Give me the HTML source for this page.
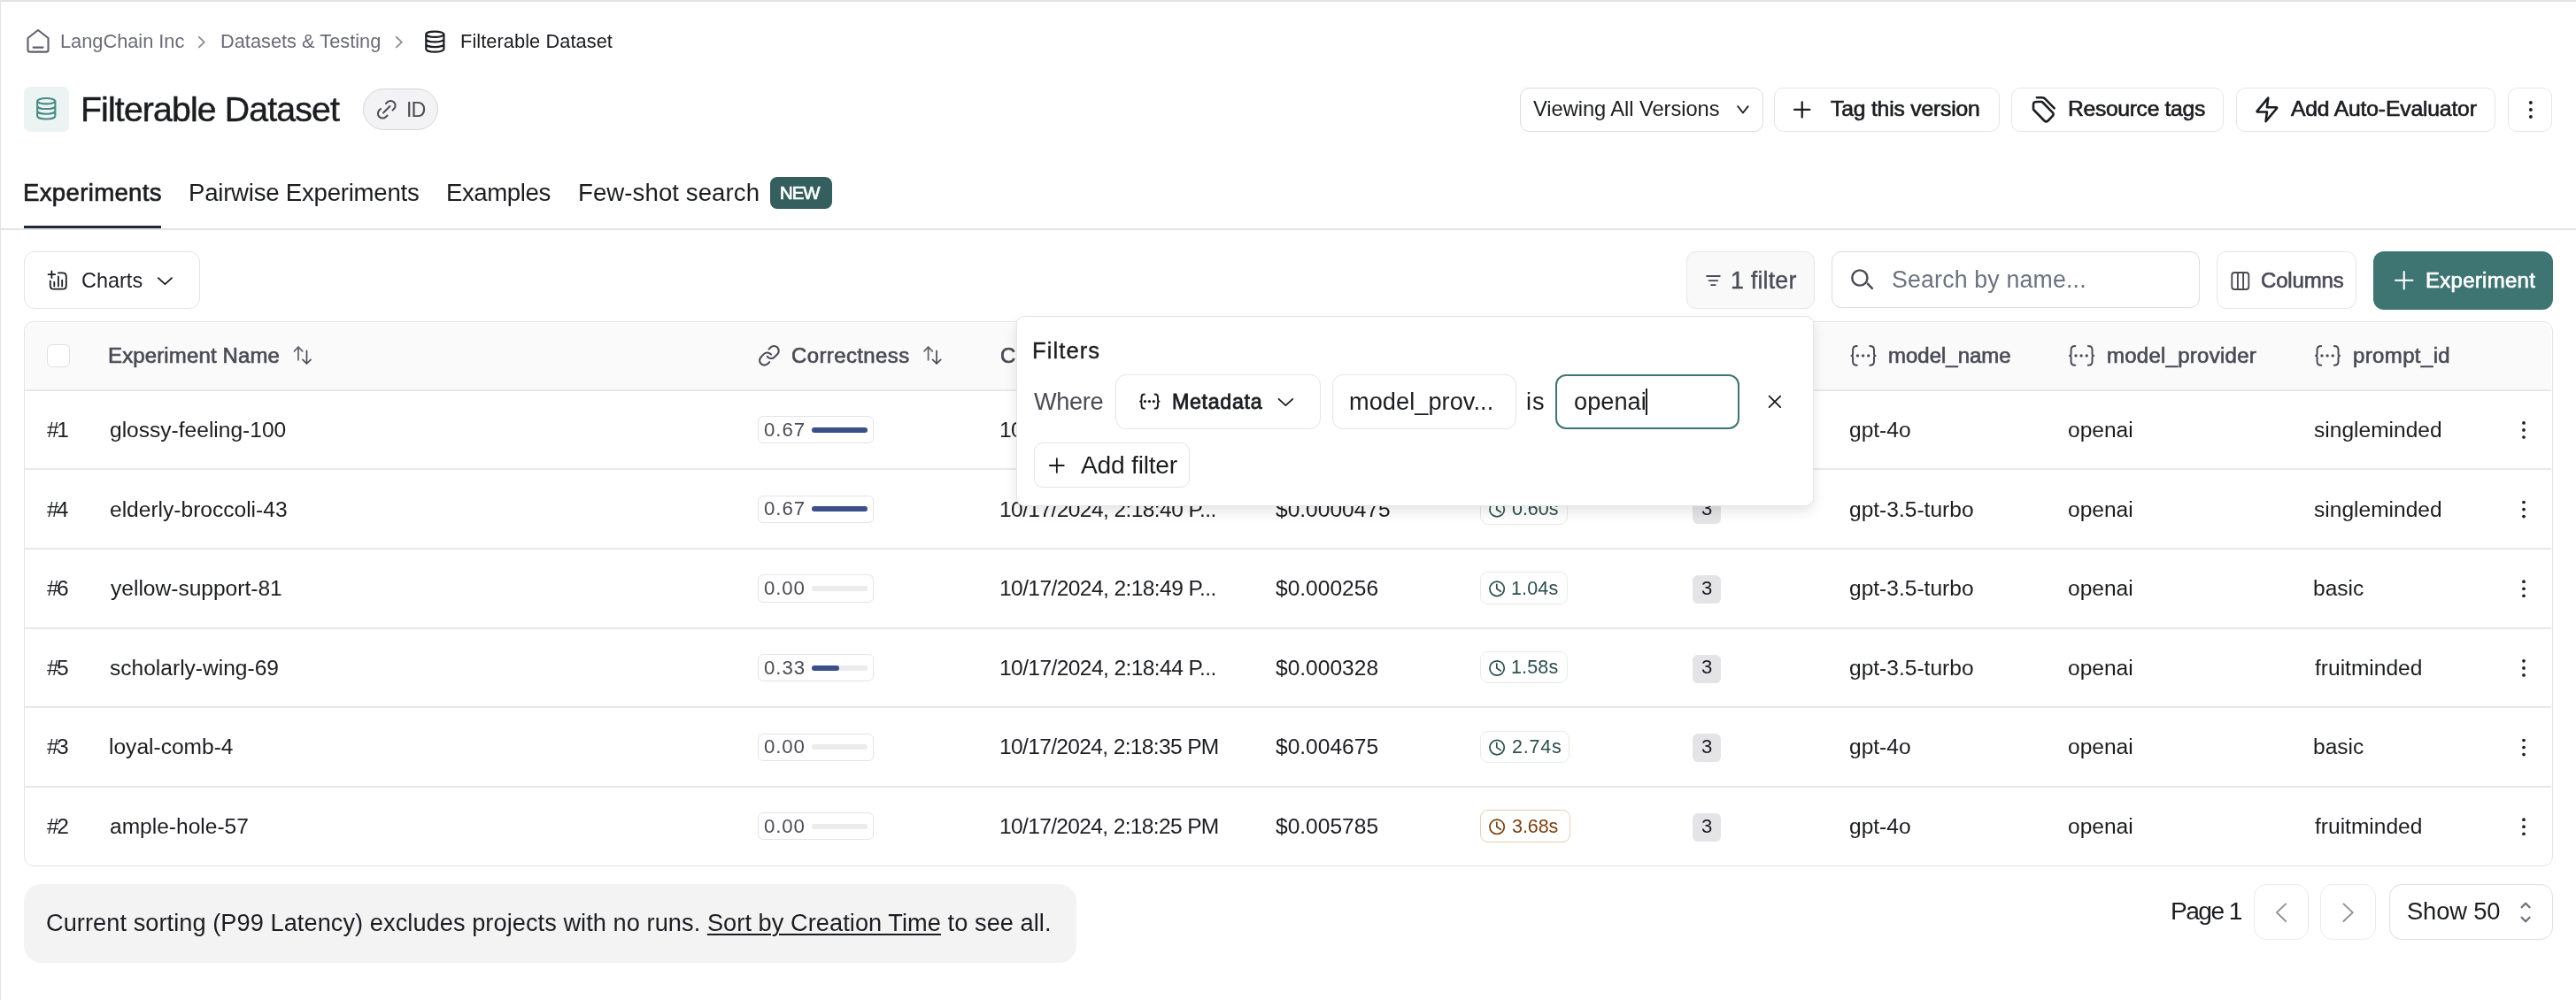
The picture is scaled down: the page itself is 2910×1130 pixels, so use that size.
<!DOCTYPE html>
<html><head><meta charset="utf-8"><style>
html,body{margin:0;padding:0;background:#fff;}
body{width:2910px;height:1130px;position:relative;overflow:hidden;font-family:"Liberation Sans",sans-serif;}
.t{position:absolute;white-space:nowrap;will-change:transform;}
.b{position:absolute;box-sizing:border-box;}
svg{position:absolute;left:0;top:0;}
</style></head><body>
<div class="b" style="left:0.00px;top:0.00px;width:2910.00px;height:2.00px;background:#e1e4e1;border-radius:0px;"></div><div class="b" style="left:0.00px;top:0.00px;width:1.00px;height:1130.00px;background:#e3e3e6;border-radius:0px;"></div><div class="t" style="left:68.21px;top:36.24px;font-size:21.80px;line-height:21.80px;font-weight:400;color:#6b6c78;letter-spacing:-0.020px;">LangChain Inc</div><div class="t" style="left:249.21px;top:36.24px;font-size:21.80px;line-height:21.80px;font-weight:400;color:#6b6c78;letter-spacing:0.000px;">Datasets &amp; Testing</div><div class="t" style="left:520.21px;top:36.24px;font-size:21.80px;line-height:21.80px;font-weight:400;color:#1c1d21;letter-spacing:0.064px;">Filterable Dataset</div><div class="b" style="left:27.00px;top:98.00px;width:51.00px;height:51.00px;background:#ebf4f3;border-radius:7px;"></div><div class="t" style="left:90.73px;top:103.57px;font-size:39.24px;line-height:39.24px;font-weight:400;color:#1c1d21;letter-spacing:-0.856px;-webkit-text-stroke:0.5px #1c1d21;">Filterable Dataset</div><div class="b" style="left:410.20px;top:100.20px;width:84.50px;height:46.50px;background:#f3f3f5;border:1.5px solid #d6d6dc;border-radius:24px;box-sizing:border-box;"></div><div class="t" style="left:458.65px;top:112.91px;font-size:23.26px;line-height:23.26px;font-weight:400;color:#4b4b57;letter-spacing:-0.997px;">ID</div><div class="b" style="left:1717.20px;top:98.90px;width:274.40px;height:49.80px;background:#fff;border:1.5px solid #dadae0;border-radius:10.5px;box-sizing:border-box;"></div><div class="b" style="left:2004.20px;top:98.90px;width:255.30px;height:49.80px;background:#fff;border:1.5px solid #e5e5e8;border-radius:10.5px;box-sizing:border-box;"></div><div class="b" style="left:2272.20px;top:98.90px;width:239.40px;height:49.80px;background:#fff;border:1.5px solid #e5e5e8;border-radius:10.5px;box-sizing:border-box;"></div><div class="b" style="left:2525.70px;top:98.90px;width:293.70px;height:49.80px;background:#fff;border:1.5px solid #e5e5e8;border-radius:10.5px;box-sizing:border-box;"></div><div class="b" style="left:2833.30px;top:98.90px;width:50.00px;height:49.80px;background:#fff;border:1.5px solid #e5e5e8;border-radius:10.5px;box-sizing:border-box;"></div><div class="t" style="left:1731.90px;top:111.84px;font-size:23.69px;line-height:23.69px;font-weight:400;color:#1c1d21;letter-spacing:-0.057px;">Viewing All Versions</div><div class="t" style="left:2068.47px;top:110.68px;font-size:24.71px;line-height:24.71px;font-weight:400;color:#1c1d21;letter-spacing:-0.194px;-webkit-text-stroke:0.65px #1c1d21;">Tag this version</div><div class="t" style="left:2336.30px;top:110.68px;font-size:24.71px;line-height:24.71px;font-weight:400;color:#1c1d21;letter-spacing:-0.337px;-webkit-text-stroke:0.65px #1c1d21;">Resource tags</div><div class="t" style="left:2587.78px;top:110.68px;font-size:24.71px;line-height:24.71px;font-weight:400;color:#1c1d21;letter-spacing:-0.175px;-webkit-text-stroke:0.65px #1c1d21;">Add Auto-Evaluator</div><div class="t" style="left:25.66px;top:203.62px;font-size:27.62px;line-height:27.62px;font-weight:400;color:#1c1d21;letter-spacing:0.313px;-webkit-text-stroke:0.65px #1c1d21;">Experiments</div><div class="t" style="left:212.73px;top:203.62px;font-size:27.62px;line-height:27.62px;font-weight:400;color:#1c1d21;letter-spacing:-0.245px;">Pairwise Experiments</div><div class="t" style="left:503.73px;top:203.62px;font-size:27.62px;line-height:27.62px;font-weight:400;color:#1c1d21;letter-spacing:-0.427px;">Examples</div><div class="t" style="left:652.73px;top:203.62px;font-size:27.62px;line-height:27.62px;font-weight:400;color:#1c1d21;letter-spacing:0.066px;">Few-shot search</div><div class="b" style="left:869.90px;top:199.90px;width:70.20px;height:36.00px;background:#345f5e;border-radius:8px;"></div><div class="t" style="left:881.48px;top:207.87px;font-size:20.35px;line-height:20.35px;font-weight:400;color:#fff;letter-spacing:-1.018px;-webkit-text-stroke:0.7px #fff;">NEW</div><div class="b" style="left:1.00px;top:258.00px;width:2909.00px;height:1.50px;background:#e4e4e7;border-radius:0px;"></div><div class="b" style="left:27.00px;top:254.80px;width:155.00px;height:3.40px;background:#1e293b;border-radius:0px;"></div><div class="b" style="left:26.90px;top:284.20px;width:199.60px;height:65.30px;background:#fff;border:1.5px solid #e5e5e8;border-radius:12px;box-sizing:border-box;"></div><div class="t" style="left:91.91px;top:305.99px;font-size:23.40px;line-height:23.40px;font-weight:400;color:#1c1d21;letter-spacing:0.042px;">Charts</div><div class="b" style="left:1904.70px;top:284.00px;width:145.30px;height:65.00px;background:#f9f9fa;border:1.5px solid #e6e6ea;border-radius:11px;box-sizing:border-box;"></div><div class="t" style="left:1954.86px;top:303.86px;font-size:26.74px;line-height:26.74px;font-weight:400;color:#4b4b57;letter-spacing:0.222px;-webkit-text-stroke:0.4px #4b4b57;">1 filter</div><div class="b" style="left:2069.00px;top:284.00px;width:415.60px;height:64.00px;background:#fff;border:1.5px solid #dcdce2;border-radius:11px;box-sizing:border-box;"></div><div class="t" style="left:2136.79px;top:303.16px;font-size:26.74px;line-height:26.74px;font-weight:400;color:#6b7280;letter-spacing:0.164px;">Search by name...</div><div class="b" style="left:2503.70px;top:284.00px;width:158.00px;height:65.00px;background:#fff;border:1.5px solid #e6e6ea;border-radius:11px;box-sizing:border-box;"></div><div class="t" style="left:2553.71px;top:304.59px;font-size:23.98px;line-height:23.98px;font-weight:400;color:#4b4b57;letter-spacing:-0.133px;-webkit-text-stroke:0.65px #4b4b57;">Columns</div><div class="b" style="left:2681.00px;top:284.00px;width:202.60px;height:65.50px;background:#3e7573;border-radius:12px;"></div><div class="t" style="left:2739.96px;top:304.69px;font-size:23.98px;line-height:23.98px;font-weight:400;color:#fff;letter-spacing:0.289px;-webkit-text-stroke:0.65px #fff;">Experiment</div><div class="b" style="left:26.80px;top:363.00px;width:2857.20px;height:615.80px;background:#fff;border:1.5px solid #e4e4e7;border-radius:11px;box-sizing:border-box;overflow:hidden;"></div><div class="b" style="left:28.30px;top:364.50px;width:2854.20px;height:76.00px;background:#fafafa;border-radius:0px;border-radius:10px 10px 0 0;"></div><div class="b" style="left:28.30px;top:440.00px;width:2854.20px;height:1.50px;background:#e8e8eb;border-radius:0px;"></div><div class="b" style="left:28.30px;top:529.00px;width:2854.20px;height:1.50px;background:#e8e8eb;border-radius:0px;"></div><div class="b" style="left:28.30px;top:619.00px;width:2854.20px;height:1.50px;background:#e8e8eb;border-radius:0px;"></div><div class="b" style="left:28.30px;top:709.00px;width:2854.20px;height:1.50px;background:#e8e8eb;border-radius:0px;"></div><div class="b" style="left:28.30px;top:798.00px;width:2854.20px;height:1.50px;background:#e8e8eb;border-radius:0px;"></div><div class="b" style="left:28.30px;top:888.00px;width:2854.20px;height:1.50px;background:#e8e8eb;border-radius:0px;"></div><div class="b" style="left:53.20px;top:389.00px;width:25.60px;height:25.60px;background:#fff;border:1.8px solid #e1e1e5;border-radius:6px;box-sizing:border-box;"></div><div class="t" style="left:122.36px;top:389.69px;font-size:23.98px;line-height:23.98px;font-weight:400;color:#4b4b57;letter-spacing:0.147px;-webkit-text-stroke:0.65px #4b4b57;">Experiment Name</div><div class="t" style="left:894.11px;top:389.69px;font-size:23.98px;line-height:23.98px;font-weight:400;color:#4b4b57;letter-spacing:0.395px;-webkit-text-stroke:0.65px #4b4b57;">Correctness</div><div class="t" style="left:1130.11px;top:389.69px;font-size:23.98px;line-height:23.98px;font-weight:400;color:#4b4b57;letter-spacing:0.000px;-webkit-text-stroke:0.65px #4b4b57;">Created At</div><div class="t" style="left:2133.43px;top:389.69px;font-size:23.98px;line-height:23.98px;font-weight:400;color:#4b4b57;letter-spacing:0.007px;-webkit-text-stroke:0.65px #4b4b57;">model_name</div><div class="t" style="left:2379.93px;top:389.69px;font-size:23.98px;line-height:23.98px;font-weight:400;color:#4b4b57;letter-spacing:0.272px;-webkit-text-stroke:0.65px #4b4b57;">model_provider</div><div class="t" style="left:2657.98px;top:389.69px;font-size:23.98px;line-height:23.98px;font-weight:400;color:#4b4b57;letter-spacing:0.387px;-webkit-text-stroke:0.65px #4b4b57;">prompt_id</div><div class="t" style="left:52.89px;top:474.10px;font-size:24.56px;line-height:24.56px;font-weight:400;color:#1c1d21;letter-spacing:-2.515px;">#1</div><div class="t" style="left:123.77px;top:474.10px;font-size:24.56px;line-height:24.56px;font-weight:400;color:#1c1d21;letter-spacing:0.000px;">glossy-feeling-100</div><div class="b" style="left:856.30px;top:470.02px;width:130.50px;height:31.20px;background:#fff;border:1.5px solid #e4e4e7;border-radius:6px;box-sizing:border-box;"></div><div class="t" style="left:862.93px;top:474.60px;font-size:22.24px;line-height:22.24px;font-weight:400;color:#4b4b57;letter-spacing:0.968px;">0.67</div><div class="b" style="left:916.50px;top:482.72px;width:63.50px;height:6.00px;background:#ececee;border-radius:3px;"></div><div class="b" style="left:916.50px;top:482.72px;width:63.50px;height:6.00px;background:#3b4f8a;border-radius:3px;"></div><div class="t" style="left:1129.13px;top:474.10px;font-size:24.56px;line-height:24.56px;font-weight:400;color:#1c1d21;letter-spacing:-0.588px;">10/17/2024, 2:18:52 P...</div><div class="t" style="left:1441.34px;top:474.10px;font-size:24.56px;line-height:24.56px;font-weight:400;color:#1c1d21;letter-spacing:0.000px;">$0.000089</div><div class="b" style="left:1672.40px;top:466.93px;width:98.20px;height:36.60px;background:#fff;border:1.5px solid #e3efe1;border-radius:9px;box-sizing:border-box;"></div><div class="t" style="left:1708.26px;top:475.51px;font-size:21.51px;line-height:21.51px;font-weight:400;color:#2d4f4b;letter-spacing:-0.052px;">0.45s</div><div class="b" style="left:1912.00px;top:470.82px;width:32.00px;height:31.80px;background:#e4e4e7;border-radius:6px;"></div><div class="t" style="left:1921.91px;top:474.31px;font-size:22.17px;line-height:22.17px;font-weight:400;color:#1c1d21;letter-spacing:0.000px;">3</div><div class="t" style="left:2088.97px;top:474.10px;font-size:24.56px;line-height:24.56px;font-weight:400;color:#1c1d21;letter-spacing:0.000px;">gpt-4o</div><div class="t" style="left:2335.97px;top:474.10px;font-size:24.56px;line-height:24.56px;font-weight:400;color:#1c1d21;letter-spacing:0.000px;">openai</div><div class="t" style="left:2614.32px;top:474.10px;font-size:24.56px;line-height:24.56px;font-weight:400;color:#1c1d21;letter-spacing:0.000px;">singleminded</div><div class="t" style="left:52.89px;top:563.60px;font-size:24.56px;line-height:24.56px;font-weight:400;color:#1c1d21;letter-spacing:-2.995px;">#4</div><div class="t" style="left:123.76px;top:563.60px;font-size:24.56px;line-height:24.56px;font-weight:400;color:#1c1d21;letter-spacing:0.000px;">elderly-broccoli-43</div><div class="b" style="left:856.30px;top:559.67px;width:130.50px;height:31.20px;background:#fff;border:1.5px solid #e4e4e7;border-radius:6px;box-sizing:border-box;"></div><div class="t" style="left:862.93px;top:564.25px;font-size:22.24px;line-height:22.24px;font-weight:400;color:#4b4b57;letter-spacing:0.968px;">0.67</div><div class="b" style="left:916.50px;top:572.37px;width:63.50px;height:6.00px;background:#ececee;border-radius:3px;"></div><div class="b" style="left:916.50px;top:572.37px;width:63.50px;height:6.00px;background:#3b4f8a;border-radius:3px;"></div><div class="t" style="left:1129.13px;top:563.60px;font-size:24.56px;line-height:24.56px;font-weight:400;color:#1c1d21;letter-spacing:-0.588px;">10/17/2024, 2:18:40 P...</div><div class="t" style="left:1441.34px;top:563.60px;font-size:24.56px;line-height:24.56px;font-weight:400;color:#1c1d21;letter-spacing:0.000px;">$0.0000475</div><div class="b" style="left:1672.40px;top:556.57px;width:98.20px;height:36.60px;background:#fff;border:1.5px solid #e3efe1;border-radius:9px;box-sizing:border-box;"></div><div class="t" style="left:1708.26px;top:565.16px;font-size:21.51px;line-height:21.51px;font-weight:400;color:#2d4f4b;letter-spacing:-0.052px;">0.60s</div><div class="b" style="left:1912.00px;top:560.47px;width:32.00px;height:31.80px;background:#e4e4e7;border-radius:6px;"></div><div class="t" style="left:1921.91px;top:563.96px;font-size:22.17px;line-height:22.17px;font-weight:400;color:#1c1d21;letter-spacing:0.000px;">3</div><div class="t" style="left:2088.97px;top:563.60px;font-size:24.56px;line-height:24.56px;font-weight:400;color:#1c1d21;letter-spacing:0.000px;">gpt-3.5-turbo</div><div class="t" style="left:2335.97px;top:563.60px;font-size:24.56px;line-height:24.56px;font-weight:400;color:#1c1d21;letter-spacing:0.000px;">openai</div><div class="t" style="left:2614.32px;top:563.60px;font-size:24.56px;line-height:24.56px;font-weight:400;color:#1c1d21;letter-spacing:0.000px;">singleminded</div><div class="t" style="left:52.89px;top:653.10px;font-size:24.56px;line-height:24.56px;font-weight:400;color:#1c1d21;letter-spacing:-2.635px;">#6</div><div class="t" style="left:124.74px;top:653.10px;font-size:24.56px;line-height:24.56px;font-weight:400;color:#1c1d21;letter-spacing:0.000px;">yellow-support-81</div><div class="b" style="left:856.30px;top:649.33px;width:130.50px;height:31.20px;background:#fff;border:1.5px solid #e4e4e7;border-radius:6px;box-sizing:border-box;"></div><div class="t" style="left:862.93px;top:653.90px;font-size:22.24px;line-height:22.24px;font-weight:400;color:#4b4b57;letter-spacing:0.885px;">0.00</div><div class="b" style="left:916.50px;top:662.02px;width:63.50px;height:6.00px;background:#ececee;border-radius:3px;"></div><div class="t" style="left:1129.13px;top:653.10px;font-size:24.56px;line-height:24.56px;font-weight:400;color:#1c1d21;letter-spacing:-0.588px;">10/17/2024, 2:18:49 P...</div><div class="t" style="left:1441.34px;top:653.10px;font-size:24.56px;line-height:24.56px;font-weight:400;color:#1c1d21;letter-spacing:0.000px;">$0.000256</div><div class="b" style="left:1672.40px;top:646.23px;width:98.20px;height:36.60px;background:#fff;border:1.5px solid #e3efe1;border-radius:9px;box-sizing:border-box;"></div><div class="t" style="left:1707.46px;top:654.81px;font-size:21.51px;line-height:21.51px;font-weight:400;color:#2d4f4b;letter-spacing:0.148px;">1.04s</div><div class="b" style="left:1912.00px;top:650.12px;width:32.00px;height:31.80px;background:#e4e4e7;border-radius:6px;"></div><div class="t" style="left:1921.91px;top:653.61px;font-size:22.17px;line-height:22.17px;font-weight:400;color:#1c1d21;letter-spacing:0.000px;">3</div><div class="t" style="left:2088.97px;top:653.10px;font-size:24.56px;line-height:24.56px;font-weight:400;color:#1c1d21;letter-spacing:0.000px;">gpt-3.5-turbo</div><div class="t" style="left:2335.97px;top:653.10px;font-size:24.56px;line-height:24.56px;font-weight:400;color:#1c1d21;letter-spacing:0.000px;">openai</div><div class="t" style="left:2613.42px;top:653.10px;font-size:24.56px;line-height:24.56px;font-weight:400;color:#1c1d21;letter-spacing:0.000px;">basic</div><div class="t" style="left:52.89px;top:742.60px;font-size:24.56px;line-height:24.56px;font-weight:400;color:#1c1d21;letter-spacing:-2.683px;">#5</div><div class="t" style="left:124.12px;top:742.60px;font-size:24.56px;line-height:24.56px;font-weight:400;color:#1c1d21;letter-spacing:0.000px;">scholarly-wing-69</div><div class="b" style="left:856.30px;top:738.98px;width:130.50px;height:31.20px;background:#fff;border:1.5px solid #e4e4e7;border-radius:6px;box-sizing:border-box;"></div><div class="t" style="left:862.93px;top:743.55px;font-size:22.24px;line-height:22.24px;font-weight:400;color:#4b4b57;letter-spacing:0.921px;">0.33</div><div class="b" style="left:916.50px;top:751.68px;width:63.50px;height:6.00px;background:#ececee;border-radius:3px;"></div><div class="b" style="left:916.50px;top:751.68px;width:31.75px;height:6.00px;background:#3b4f8a;border-radius:3px;"></div><div class="t" style="left:1129.13px;top:742.60px;font-size:24.56px;line-height:24.56px;font-weight:400;color:#1c1d21;letter-spacing:-0.588px;">10/17/2024, 2:18:44 P...</div><div class="t" style="left:1441.34px;top:742.60px;font-size:24.56px;line-height:24.56px;font-weight:400;color:#1c1d21;letter-spacing:0.000px;">$0.000328</div><div class="b" style="left:1672.40px;top:735.88px;width:98.20px;height:36.60px;background:#fff;border:1.5px solid #e3efe1;border-radius:9px;box-sizing:border-box;"></div><div class="t" style="left:1707.46px;top:744.46px;font-size:21.51px;line-height:21.51px;font-weight:400;color:#2d4f4b;letter-spacing:0.148px;">1.58s</div><div class="b" style="left:1912.00px;top:739.78px;width:32.00px;height:31.80px;background:#e4e4e7;border-radius:6px;"></div><div class="t" style="left:1921.91px;top:743.26px;font-size:22.17px;line-height:22.17px;font-weight:400;color:#1c1d21;letter-spacing:0.000px;">3</div><div class="t" style="left:2088.97px;top:742.60px;font-size:24.56px;line-height:24.56px;font-weight:400;color:#1c1d21;letter-spacing:0.000px;">gpt-3.5-turbo</div><div class="t" style="left:2335.97px;top:742.60px;font-size:24.56px;line-height:24.56px;font-weight:400;color:#1c1d21;letter-spacing:0.000px;">openai</div><div class="t" style="left:2614.65px;top:742.60px;font-size:24.56px;line-height:24.56px;font-weight:400;color:#1c1d21;letter-spacing:0.000px;">fruitminded</div><div class="t" style="left:52.89px;top:832.10px;font-size:24.56px;line-height:24.56px;font-weight:400;color:#1c1d21;letter-spacing:-2.635px;">#3</div><div class="t" style="left:123.14px;top:832.10px;font-size:24.56px;line-height:24.56px;font-weight:400;color:#1c1d21;letter-spacing:0.000px;">loyal-comb-4</div><div class="b" style="left:856.30px;top:828.62px;width:130.50px;height:31.20px;background:#fff;border:1.5px solid #e4e4e7;border-radius:6px;box-sizing:border-box;"></div><div class="t" style="left:862.93px;top:833.20px;font-size:22.24px;line-height:22.24px;font-weight:400;color:#4b4b57;letter-spacing:0.885px;">0.00</div><div class="b" style="left:916.50px;top:841.32px;width:63.50px;height:6.00px;background:#ececee;border-radius:3px;"></div><div class="t" style="left:1129.13px;top:832.10px;font-size:24.56px;line-height:24.56px;font-weight:400;color:#1c1d21;letter-spacing:-0.654px;">10/17/2024, 2:18:35 PM</div><div class="t" style="left:1441.34px;top:832.10px;font-size:24.56px;line-height:24.56px;font-weight:400;color:#1c1d21;letter-spacing:0.000px;">$0.004675</div><div class="b" style="left:1672.40px;top:825.52px;width:100.70px;height:36.60px;background:#fff;border:1.5px solid #e3efe1;border-radius:9px;box-sizing:border-box;"></div><div class="t" style="left:1708.02px;top:834.11px;font-size:21.51px;line-height:21.51px;font-weight:400;color:#2d4f4b;letter-spacing:0.809px;">2.74s</div><div class="b" style="left:1912.00px;top:829.42px;width:32.00px;height:31.80px;background:#e4e4e7;border-radius:6px;"></div><div class="t" style="left:1921.91px;top:832.91px;font-size:22.17px;line-height:22.17px;font-weight:400;color:#1c1d21;letter-spacing:0.000px;">3</div><div class="t" style="left:2088.97px;top:832.10px;font-size:24.56px;line-height:24.56px;font-weight:400;color:#1c1d21;letter-spacing:0.000px;">gpt-4o</div><div class="t" style="left:2335.97px;top:832.10px;font-size:24.56px;line-height:24.56px;font-weight:400;color:#1c1d21;letter-spacing:0.000px;">openai</div><div class="t" style="left:2613.42px;top:832.10px;font-size:24.56px;line-height:24.56px;font-weight:400;color:#1c1d21;letter-spacing:0.000px;">basic</div><div class="t" style="left:52.89px;top:921.60px;font-size:24.56px;line-height:24.56px;font-weight:400;color:#1c1d21;letter-spacing:-2.479px;">#2</div><div class="t" style="left:123.76px;top:921.60px;font-size:24.56px;line-height:24.56px;font-weight:400;color:#1c1d21;letter-spacing:0.000px;">ample-hole-57</div><div class="b" style="left:856.30px;top:918.28px;width:130.50px;height:31.20px;background:#fff;border:1.5px solid #e4e4e7;border-radius:6px;box-sizing:border-box;"></div><div class="t" style="left:862.93px;top:922.85px;font-size:22.24px;line-height:22.24px;font-weight:400;color:#4b4b57;letter-spacing:0.885px;">0.00</div><div class="b" style="left:916.50px;top:930.98px;width:63.50px;height:6.00px;background:#ececee;border-radius:3px;"></div><div class="t" style="left:1129.13px;top:921.60px;font-size:24.56px;line-height:24.56px;font-weight:400;color:#1c1d21;letter-spacing:-0.654px;">10/17/2024, 2:18:25 PM</div><div class="t" style="left:1441.34px;top:921.60px;font-size:24.56px;line-height:24.56px;font-weight:400;color:#1c1d21;letter-spacing:0.000px;">$0.005785</div><div class="b" style="left:1672.40px;top:915.18px;width:101.70px;height:36.60px;background:#fff;border:1.5px solid #e6cdb4;border-radius:9px;box-sizing:border-box;"></div><div class="t" style="left:1708.28px;top:923.76px;font-size:21.51px;line-height:21.51px;font-weight:400;color:#7a3f0f;letter-spacing:-0.057px;">3.68s</div><div class="b" style="left:1912.00px;top:919.08px;width:32.00px;height:31.80px;background:#e4e4e7;border-radius:6px;"></div><div class="t" style="left:1921.91px;top:922.56px;font-size:22.17px;line-height:22.17px;font-weight:400;color:#1c1d21;letter-spacing:0.000px;">3</div><div class="t" style="left:2088.97px;top:921.60px;font-size:24.56px;line-height:24.56px;font-weight:400;color:#1c1d21;letter-spacing:0.000px;">gpt-4o</div><div class="t" style="left:2335.97px;top:921.60px;font-size:24.56px;line-height:24.56px;font-weight:400;color:#1c1d21;letter-spacing:0.000px;">openai</div><div class="t" style="left:2614.65px;top:921.60px;font-size:24.56px;line-height:24.56px;font-weight:400;color:#1c1d21;letter-spacing:0.000px;">fruitminded</div><div class="b" style="left:27.00px;top:998.80px;width:1188.70px;height:89.40px;background:#f3f3f3;border-radius:20px;"></div><div class="t" style="left:52.42px;top:1028.99px;font-size:27.18px;line-height:27.18px;color:#1c1d21;letter-spacing:0.062px">Current sorting (P99 Latency) excludes projects with no runs. <span style="text-decoration:underline;text-underline-offset:3px;text-decoration-thickness:1.6px">Sort by Creation Time</span> to see all.</div><div class="t" style="left:2451.59px;top:1015.13px;font-size:28.20px;line-height:28.20px;font-weight:400;color:#1c1d21;letter-spacing:-1.576px;">Page 1</div><div class="b" style="left:2545.50px;top:999.40px;width:62.80px;height:62.80px;background:#fff;border:1.5px solid #ececef;border-radius:14px;box-sizing:border-box;"></div><div class="b" style="left:2621.30px;top:999.40px;width:63.20px;height:62.80px;background:#fff;border:1.5px solid #ececef;border-radius:14px;box-sizing:border-box;"></div><div class="b" style="left:2698.60px;top:999.40px;width:185.10px;height:63.10px;background:#fff;border:1.5px solid #dedee3;border-radius:14px;box-sizing:border-box;"></div><div class="t" style="left:2718.56px;top:1015.66px;font-size:27.33px;line-height:27.33px;font-weight:400;color:#1c1d21;letter-spacing:-0.139px;">Show 50</div>
<svg width="2910" height="1130" viewBox="0 0 2910 1130"><path d="M31.5 43 L43 34 L54.5 43 V56.4 Q54.5 58.6 52.3 58.6 H33.7 Q31.5 58.6 31.5 56.4 Z M37.6 53.6 H48.6" fill="none" stroke="#5f6070" stroke-width="2.1" stroke-linecap="round" stroke-linejoin="round" /><path d="M224.8 41.8 L230.8 47.6 L224.8 53.4" fill="none" stroke="#8a8b96" stroke-width="1.8" stroke-linecap="round" stroke-linejoin="round" /><path d="M447.8 41.8 L453.8 47.6 L447.8 53.4" fill="none" stroke="#8a8b96" stroke-width="1.8" stroke-linecap="round" stroke-linejoin="round" /><path d="M481.30 38.72 A10.05 3.12 0 1 0 501.40 38.72 A10.05 3.12 0 1 0 481.30 38.72 Z M481.30 44.34 A10.05 3.12 0 0 0 501.40 44.34 M481.30 49.96 A10.05 3.12 0 0 0 501.40 49.96 M481.30 55.58 A10.05 3.12 0 0 0 501.40 55.58 M481.30 38.72 V55.58 M501.40 38.72 V55.58" fill="none" stroke="#1c1d21" stroke-width="2.2" stroke-linecap="round" stroke-linejoin="round" /><path d="M42.15 114.21 A10.10 3.16 0 1 0 62.35 114.21 A10.10 3.16 0 1 0 42.15 114.21 Z M42.15 119.90 A10.10 3.16 0 0 0 62.35 119.90 M42.15 125.60 A10.10 3.16 0 0 0 62.35 125.60 M42.15 131.29 A10.10 3.16 0 0 0 62.35 131.29 M42.15 114.21 V131.29 M62.35 114.21 V131.29" fill="none" stroke="#4a8a85" stroke-width="2.1" stroke-linecap="round" stroke-linejoin="round" /><g transform="matrix(1.0657 0 0 1.0657 423.961 110.961)"><path d="M12.7076 18.3639L11.2933 19.7781C9.34072 21.7308 6.1749 21.7308 4.22228 19.7781C2.26966 17.8255 2.26966 14.6597 4.22228 12.7071L5.63649 11.2929M18.3644 12.7071L19.7786 11.2929C21.7312 9.34024 21.7312 6.17441 19.7786 4.22179C17.826 2.26917 14.6602 2.26917 12.7076 4.22179L11.2933 5.636M8.50045 15.4999L15.5005 8.49994" fill="none" stroke="#4b4b57" stroke-width="2.0" vector-effect="non-scaling-stroke" stroke-linecap="round" stroke-linejoin="round"/></g><path d="M1963.20 120.10 L1968.95 127.50 L1974.70 120.10" fill="none" stroke="#1c1d21" stroke-width="1.8" stroke-linecap="round" stroke-linejoin="round" /><path d="M2035.75 115.35 V132.55 M2027.15 123.95 H2044.35" fill="none" stroke="#1c1d21" stroke-width="2.3" stroke-linecap="round" stroke-linejoin="round" /><g transform="matrix(1.3167 0 0 1.3436 2293.050 107.613)"><path d="M21 11L13.4059 3.40589C12.887 2.88703 12.6276 2.6276 12.3249 2.44208C12.0564 2.27759 11.7638 2.15638 11.4577 2.08289C11.1124 2 10.7455 2 10.0118 2L6 2M3 8.7L3 10.6745C3 11.1637 3 11.4083 3.05526 11.6385C3.10425 11.8425 3.18506 12.0376 3.29472 12.2166C3.4184 12.4184 3.59136 12.5914 3.93726 12.9373L11.7373 20.7373C12.5293 21.5293 12.9253 21.9253 13.382 22.0737C13.7837 22.2042 14.2163 22.2042 14.618 22.0737C15.0747 21.9253 15.4707 21.5293 16.2627 20.7373L18.7373 18.2627C19.5293 17.4707 19.9253 17.0747 20.0737 16.618C20.2042 16.2163 20.2042 15.7837 20.0737 15.382C19.9253 14.9253 19.5293 14.5293 18.7373 13.7373L11.4373 6.43726C11.0914 6.09136 10.9184 5.9184 10.7166 5.79472C10.5376 5.68506 10.3425 5.60425 10.1385 5.55526C9.90829 5.5 9.6637 5.5 9.17452 5.5H6.2C5.0799 5.5 4.51984 5.5 4.09202 5.71799C3.71569 5.90973 3.40973 6.21569 3.21799 6.59202C3 7.01984 3 7.5799 3 8.7Z" fill="none" stroke="#1c1d21" stroke-width="2.6" vector-effect="non-scaling-stroke" stroke-linecap="round" stroke-linejoin="round"/></g><g transform="matrix(1.3401 0 0 1.3300 2544.820 107.940)"><path d="M13 2L4.09344 12.6879C3.74463 13.1064 3.57023 13.3157 3.56756 13.4925C3.56524 13.6461 3.63372 13.7923 3.75324 13.8889C3.89073 14 4.16316 14 4.70802 14H12L11 22L19.9065 11.3121C20.2553 10.8936 20.4297 10.6843 20.4324 10.5075C20.4347 10.3539 20.3663 10.2077 20.2467 10.1111C20.1092 10 19.8368 10 19.292 10H12L13 2Z" fill="none" stroke="#1c1d21" stroke-width="2.6" vector-effect="non-scaling-stroke" stroke-linecap="round" stroke-linejoin="round"/></g><circle cx="2858.90" cy="116.00" r="1.95" fill="#1c1d21"/><circle cx="2858.90" cy="124.00" r="1.95" fill="#1c1d21"/><circle cx="2858.90" cy="132.00" r="1.95" fill="#1c1d21"/><path d="M58.4 306.4 V314 M54.6 310.2 H62.2" fill="none" stroke="#1c1d21" stroke-width="1.8" stroke-linecap="round" stroke-linejoin="round" /><path d="M65.8 308.3 H70.8 Q74.8 308.3 74.8 312.3 V322.7 Q74.8 326.7 70.8 326.7 H60.8 Q56.8 326.7 56.8 322.7 V317.4" fill="none" stroke="#1c1d21" stroke-width="1.8" stroke-linecap="round" stroke-linejoin="round" /><path d="M61.3 318.6 V323.4 M65.9 312.4 V323.4 M70.2 316.6 V323.4" fill="none" stroke="#1c1d21" stroke-width="1.8" stroke-linecap="round" stroke-linejoin="round" /><path d="M178.80 314.20 L186.45 321.10 L194.10 314.20" fill="none" stroke="#1c1d21" stroke-width="1.8" stroke-linecap="round" stroke-linejoin="round" /><path d="M1928.1 312 H1942.8 M1930.6 317.1 H1940.3 M1933 322.1 H1937.8" fill="none" stroke="#4b4b57" stroke-width="1.9" stroke-linecap="round" stroke-linejoin="round" /><path d="M2109.8 320.6 L2114.9 325.8" fill="none" stroke="#4b4b57" stroke-width="2.5" stroke-linecap="round" stroke-linejoin="round" /><circle cx="2100.9" cy="314" r="8.6" fill="none" stroke="#4b4b57" stroke-width="2.4"/><path d="M2524.3 308 H2537.3 Q2540.3 308 2540.3 311 V324 Q2540.3 327 2537.3 327 H2524.3 Q2521.3 327 2521.3 324 V311 Q2521.3 308 2524.3 308 Z M2527.9 308 V327 M2534.1 308 V327" fill="none" stroke="#4b4b57" stroke-width="1.9" stroke-linecap="round" stroke-linejoin="round" /><path d="M2715.75 307.05 V326.55 M2706.05 316.80 H2725.45" fill="none" stroke="#fff" stroke-width="2.1" stroke-linecap="round" stroke-linejoin="round" /><path d="M337.00 392.00 V406.80 M332.50 396.80 L337.00 392.00 L341.70 396.80" fill="none" stroke="#5d5e6a" stroke-width="1.7" stroke-linecap="round" stroke-linejoin="round" /><path d="M346.50 396.40 V411.00 M341.90 406.40 L346.50 411.00 L351.10 406.40" fill="none" stroke="#4b4b57" stroke-width="1.7" stroke-linecap="round" stroke-linejoin="round" /><g transform="matrix(1.0850 0 0 1.0850 855.880 388.780)"><path d="M10 13a5 5 0 0 0 7.54.54l3-3a5 5 0 0 0-7.07-7.07l-1.72 1.71 M14 11a5 5 0 0 0-7.54-.54l-3 3a5 5 0 0 0 7.07 7.07l1.71-1.71" fill="none" stroke="#4b4b57" stroke-width="2.1" vector-effect="non-scaling-stroke" stroke-linecap="round" stroke-linejoin="round"/></g><path d="M1048.60 392.00 V406.80 M1044.10 396.80 L1048.60 392.00 L1053.30 396.80" fill="none" stroke="#5d5e6a" stroke-width="1.7" stroke-linecap="round" stroke-linejoin="round" /><path d="M1058.10 396.40 V411.00 M1053.50 406.40 L1058.10 411.00 L1062.70 406.40" fill="none" stroke="#4b4b57" stroke-width="1.7" stroke-linecap="round" stroke-linejoin="round" /><path d="M2097.78 391.00 Q2093.10 391.00 2093.10 395.24 V399.52 Q2093.10 401.90 2091.50 401.90 Q2093.10 401.90 2093.10 404.28 V408.56 Q2093.10 412.80 2097.78 412.80 M2112.32 391.00 Q2117.00 391.00 2117.00 395.24 V399.52 Q2117.00 401.90 2118.60 401.90 Q2117.00 401.90 2117.00 404.28 V408.56 Q2117.00 412.80 2112.32 412.80" fill="none" stroke="#4b4b57" stroke-width="2.0" stroke-linecap="round" stroke-linejoin="round" /><circle cx="2098.50" cy="401.90" r="1.70" fill="#4b4b57"/><circle cx="2104.61" cy="401.90" r="1.70" fill="#4b4b57"/><circle cx="2110.72" cy="401.90" r="1.70" fill="#4b4b57"/><path d="M2344.28 391.00 Q2339.60 391.00 2339.60 395.24 V399.52 Q2339.60 401.90 2338.00 401.90 Q2339.60 401.90 2339.60 404.28 V408.56 Q2339.60 412.80 2344.28 412.80 M2358.82 391.00 Q2363.50 391.00 2363.50 395.24 V399.52 Q2363.50 401.90 2365.10 401.90 Q2363.50 401.90 2363.50 404.28 V408.56 Q2363.50 412.80 2358.82 412.80" fill="none" stroke="#4b4b57" stroke-width="2.0" stroke-linecap="round" stroke-linejoin="round" /><circle cx="2345.00" cy="401.90" r="1.70" fill="#4b4b57"/><circle cx="2351.11" cy="401.90" r="1.70" fill="#4b4b57"/><circle cx="2357.22" cy="401.90" r="1.70" fill="#4b4b57"/><path d="M2622.28 391.00 Q2617.60 391.00 2617.60 395.24 V399.52 Q2617.60 401.90 2616.00 401.90 Q2617.60 401.90 2617.60 404.28 V408.56 Q2617.60 412.80 2622.28 412.80 M2636.82 391.00 Q2641.50 391.00 2641.50 395.24 V399.52 Q2641.50 401.90 2643.10 401.90 Q2641.50 401.90 2641.50 404.28 V408.56 Q2641.50 412.80 2636.82 412.80" fill="none" stroke="#4b4b57" stroke-width="2.0" stroke-linecap="round" stroke-linejoin="round" /><circle cx="2623.00" cy="401.90" r="1.70" fill="#4b4b57"/><circle cx="2629.11" cy="401.90" r="1.70" fill="#4b4b57"/><circle cx="2635.22" cy="401.90" r="1.70" fill="#4b4b57"/><circle cx="1691.10" cy="486.02" r="8.20" fill="none" stroke="#2d4f4b" stroke-width="1.7"/><path d="M1690.80 481.02 V486.02 L1695.30 489.02" fill="none" stroke="#2d4f4b" stroke-width="1.7" stroke-linecap="round" stroke-linejoin="round" /><circle cx="2851.00" cy="477.88" r="1.85" fill="#1c1d21"/><circle cx="2851.00" cy="485.93" r="1.85" fill="#1c1d21"/><circle cx="2851.00" cy="493.98" r="1.85" fill="#1c1d21"/><circle cx="1691.10" cy="575.67" r="8.20" fill="none" stroke="#2d4f4b" stroke-width="1.7"/><path d="M1690.80 570.67 V575.67 L1695.30 578.67" fill="none" stroke="#2d4f4b" stroke-width="1.7" stroke-linecap="round" stroke-linejoin="round" /><circle cx="2851.00" cy="567.52" r="1.85" fill="#1c1d21"/><circle cx="2851.00" cy="575.57" r="1.85" fill="#1c1d21"/><circle cx="2851.00" cy="583.62" r="1.85" fill="#1c1d21"/><circle cx="1691.10" cy="665.33" r="8.20" fill="none" stroke="#2d4f4b" stroke-width="1.7"/><path d="M1690.80 660.33 V665.33 L1695.30 668.33" fill="none" stroke="#2d4f4b" stroke-width="1.7" stroke-linecap="round" stroke-linejoin="round" /><circle cx="2851.00" cy="657.18" r="1.85" fill="#1c1d21"/><circle cx="2851.00" cy="665.23" r="1.85" fill="#1c1d21"/><circle cx="2851.00" cy="673.27" r="1.85" fill="#1c1d21"/><circle cx="1691.10" cy="754.98" r="8.20" fill="none" stroke="#2d4f4b" stroke-width="1.7"/><path d="M1690.80 749.98 V754.98 L1695.30 757.98" fill="none" stroke="#2d4f4b" stroke-width="1.7" stroke-linecap="round" stroke-linejoin="round" /><circle cx="2851.00" cy="746.83" r="1.85" fill="#1c1d21"/><circle cx="2851.00" cy="754.88" r="1.85" fill="#1c1d21"/><circle cx="2851.00" cy="762.93" r="1.85" fill="#1c1d21"/><circle cx="1691.10" cy="844.62" r="8.20" fill="none" stroke="#2d4f4b" stroke-width="1.7"/><path d="M1690.80 839.62 V844.62 L1695.30 847.62" fill="none" stroke="#2d4f4b" stroke-width="1.7" stroke-linecap="round" stroke-linejoin="round" /><circle cx="2851.00" cy="836.48" r="1.85" fill="#1c1d21"/><circle cx="2851.00" cy="844.52" r="1.85" fill="#1c1d21"/><circle cx="2851.00" cy="852.57" r="1.85" fill="#1c1d21"/><circle cx="1691.10" cy="934.28" r="8.20" fill="none" stroke="#7a3f0f" stroke-width="1.7"/><path d="M1690.80 929.28 V934.28 L1695.30 937.28" fill="none" stroke="#7a3f0f" stroke-width="1.7" stroke-linecap="round" stroke-linejoin="round" /><circle cx="2851.00" cy="926.13" r="1.85" fill="#1c1d21"/><circle cx="2851.00" cy="934.18" r="1.85" fill="#1c1d21"/><circle cx="2851.00" cy="942.23" r="1.85" fill="#1c1d21"/><path d="M2582.2 1021.4 L2571.9 1031.2 L2582.2 1041" fill="none" stroke="#8a8b96" stroke-width="1.8" stroke-linecap="round" stroke-linejoin="round" /><path d="M2647.4 1021.4 L2657.8 1031.2 L2647.4 1041" fill="none" stroke="#8a8b96" stroke-width="1.8" stroke-linecap="round" stroke-linejoin="round" /><path d="M2848.6 1025.3 L2853.1 1020.7 L2857.6 1025.3 M2848.6 1036.7 L2853.1 1041.3 L2857.6 1036.7" fill="none" stroke="#6b6c7a" stroke-width="2.2" stroke-linecap="round" stroke-linejoin="round" /></svg>
<div class="b" style="left:1147.70px;top:357.30px;width:901.60px;height:214.70px;background:#fff;border:1.5px solid #e4e4e7;border-radius:9px;box-sizing:border-box;box-shadow:0 6px 14px rgba(0,0,0,0.10);"></div><div class="t" style="left:1166.30px;top:384.34px;font-size:25.58px;line-height:25.58px;font-weight:400;color:#1c1d21;letter-spacing:1.081px;-webkit-text-stroke:0.4px #1c1d21;">Filters</div><div class="t" style="left:1168.08px;top:440.29px;font-size:27.18px;line-height:27.18px;font-weight:400;color:#4b4b57;letter-spacing:-0.332px;">Where</div><div class="b" style="left:1259.50px;top:422.60px;width:232.10px;height:62.70px;background:#fff;border:1.5px solid #e4e4e7;border-radius:12px;box-sizing:border-box;"></div><div class="t" style="left:1323.99px;top:442.71px;font-size:23.26px;line-height:23.26px;font-weight:400;color:#1c1d21;letter-spacing:0.663px;-webkit-text-stroke:0.8px #1c1d21;">Metadata</div><div class="b" style="left:1505.40px;top:422.60px;width:207.30px;height:62.70px;background:#fff;border:1.5px solid #e4e4e7;border-radius:12px;box-sizing:border-box;"></div><div class="t" style="left:1523.90px;top:439.99px;font-size:27.18px;line-height:27.18px;font-weight:400;color:#1c1d21;letter-spacing:0.051px;">model_prov...</div><div class="t" style="left:1724.48px;top:439.79px;font-size:27.18px;line-height:27.18px;font-weight:400;color:#1c1d21;letter-spacing:1.072px;">is</div><div class="b" style="left:1757.30px;top:422.60px;width:207.90px;height:62.70px;background:#fff;border:2.8px solid #3f7473;border-radius:12px;box-sizing:border-box;"></div><div class="t" style="left:1778.26px;top:439.79px;font-size:27.18px;line-height:27.18px;font-weight:400;color:#1c1d21;letter-spacing:0.031px;">openai</div><div class="b" style="left:1859.00px;top:438.50px;width:2.00px;height:30.10px;background:#1c1d21;border-radius:0px;"></div><div class="b" style="left:1167.50px;top:499.60px;width:176.00px;height:51.70px;background:#fff;border:1.5px solid #e4e4e7;border-radius:10px;box-sizing:border-box;"></div><div class="t" style="left:1220.94px;top:510.53px;font-size:28.20px;line-height:28.20px;font-weight:400;color:#1c1d21;letter-spacing:-0.228px;">Add filter</div>
<svg width="2910" height="1130" viewBox="0 0 2910 1130"><path d="M1292.88 445.55 Q1289.55 445.55 1289.55 448.56 V451.80 Q1289.55 453.60 1287.95 453.60 Q1289.55 453.60 1289.55 455.40 V458.64 Q1289.55 461.65 1292.88 461.65 M1304.62 445.55 Q1307.95 445.55 1307.95 448.56 V451.80 Q1307.95 453.60 1309.55 453.60 Q1307.95 453.60 1307.95 455.40 V458.64 Q1307.95 461.65 1304.62 461.65" fill="none" stroke="#1c1d21" stroke-width="1.9" stroke-linecap="round" stroke-linejoin="round" /><circle cx="1293.46" cy="453.60" r="1.61" fill="#1c1d21"/><circle cx="1298.40" cy="453.60" r="1.61" fill="#1c1d21"/><circle cx="1303.33" cy="453.60" r="1.61" fill="#1c1d21"/><path d="M1444.50 450.90 L1452.40 458.10 L1460.30 450.90" fill="none" stroke="#1c1d21" stroke-width="1.8" stroke-linecap="round" stroke-linejoin="round" /><path d="M1998.6 447.6 L2011.2 460.1 M2011.2 447.6 L1998.6 460.1" fill="none" stroke="#1c1d21" stroke-width="1.8" stroke-linecap="round" stroke-linejoin="round" /><path d="M1193.85 518.10 V533.90 M1185.90 526.00 H1201.80" fill="none" stroke="#1c1d21" stroke-width="1.8" stroke-linecap="round" stroke-linejoin="round" /></svg>
</body></html>
